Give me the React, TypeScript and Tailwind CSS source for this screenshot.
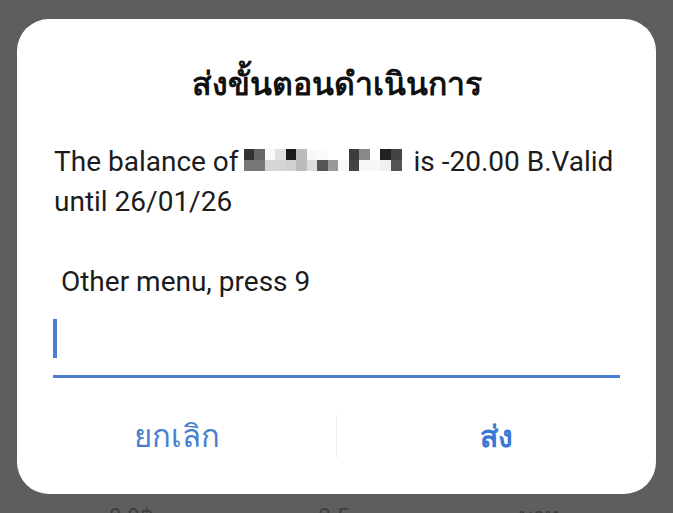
const mosaicTop = [
  "#333333", "#666666", "#f8f8f8", "#e0e0e0", "#1a1a1a", "#bbbbbb", "#f8f8f8", "#fafafa",
  "#ffffff", "#ffffff", "#3c3c3c", "#888888", "#ffffff", "#222222", "#444444",
];
const mosaicBottom = [
  "#777777", "#777777", "#d5d5d5", "#d5d5d5", "#d0d0d0", "#bbbbbb", "#dddddd", "#555555",
  "#999999", "#f8f8f8", "#444444", "#f8f8f8", "#f8f8f8", "#f0f0f0", "#555555",
];

// redacted phone number, drawn as the pixel blocks seen in the screenshot
function Mosaic() {
  return (
    <span className="ml-[5px] mr-[12px] inline-block h-[22px] w-[158px] overflow-hidden align-baseline">
      <span className="grid h-full w-full grid-cols-[repeat(15,1fr)] grid-rows-2">
        {mosaicTop.map((c, i) => (
          <span key={"t" + i} style={{ backgroundColor: c }} />
        ))}
        {mosaicBottom.map((c, i) => (
          <span key={"b" + i} style={{ backgroundColor: c }} />
        ))}
      </span>
    </span>
  );
}

export default function App() {
  return (
    <div className="relative h-[513px] w-[673px] overflow-hidden bg-[#5e5e5f] px-[17px] pt-[19px] font-['Roboto','Noto_Sans',sans-serif]">
      <div className="flex h-[475px] w-[639px] flex-col rounded-[32px] bg-white">
        <h1 className="mt-[45px] text-center text-[32px] font-bold leading-[40px] text-[#111]">
          ส่งขั้นตอนดำเนินการ
        </h1>

        <p className="mt-[38px] pl-[37px] pr-[30px] text-[28px] leading-[40px] text-[#1c1c1c]">
          The balance of
          <Mosaic />
          is -20.00 B.Valid until 26/01/26
        </p>

        <p className="mt-[40px] pl-[37px] text-[28px] leading-[40px] text-[#1c1c1c]">&nbsp;Other menu, press 9</p>

        <div className="mx-[36px] mt-[14px] flex h-[62px] items-start border-b-[3px] border-[#4a7fcf] pt-[3px]">
          <span className="h-[39px] w-[4px] bg-[#4a7fcf]" />
        </div>

        <div className="mt-[37px] flex h-[43px] items-center">
          <button type="button" className="flex-1 text-center text-[31px] leading-[43px] text-[#4a7fcf]">
            ยกเลิก
          </button>
          <span className="h-[43px] w-px bg-[#efefef]" />
          <button type="button" className="flex-1 text-center text-[30px] font-bold leading-[43px] text-[#3a78d8]">
            ส่ง
          </button>
        </div>
      </div>

      <div className="mt-[8px] flex text-[22px] leading-[30px] text-[#3e3e3e]">
        <span className="ml-[92px]">0.0฿</span>
        <span className="ml-[165px]">2.5</span>
        <span className="ml-[170px]">บาท</span>
      </div>
    </div>
  );
}
